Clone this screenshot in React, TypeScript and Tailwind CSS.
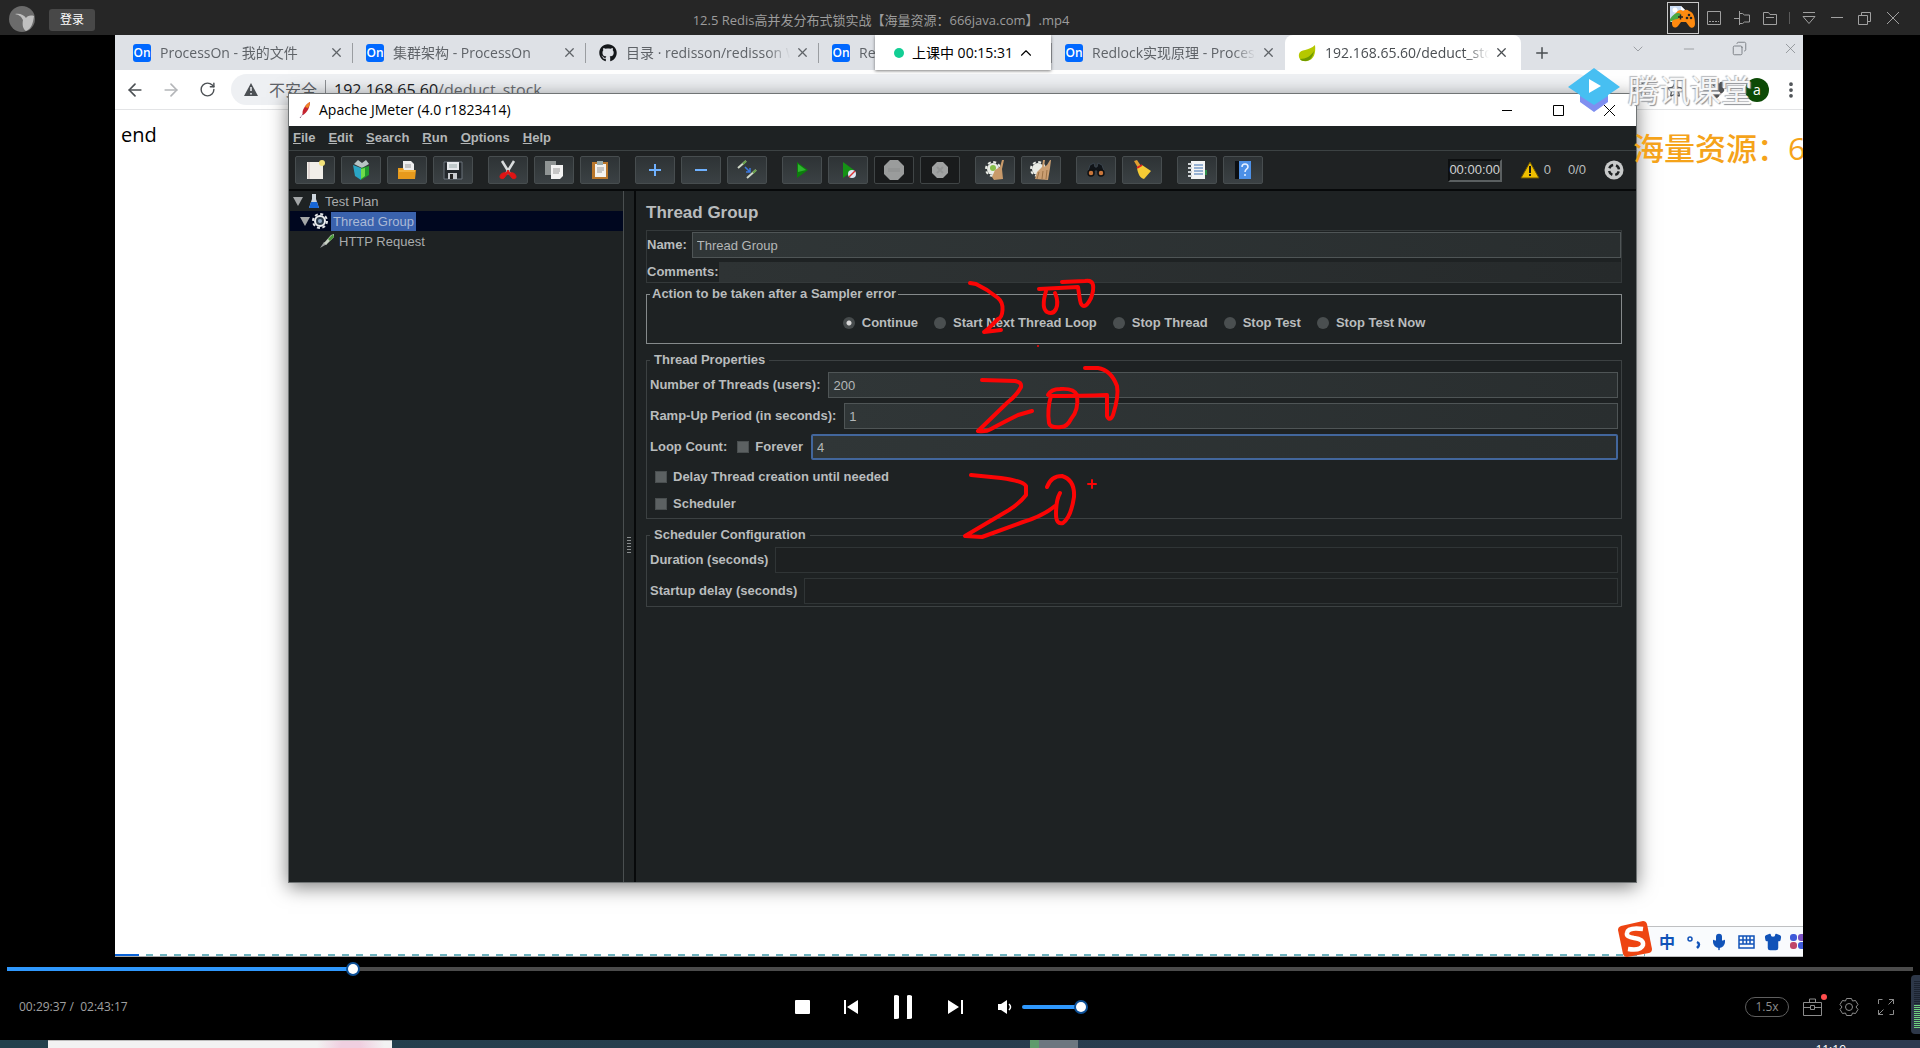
import React from 'react';
import {
  ArrowLeft, ArrowRight, RotateCw, X, Plus, Minus, ChevronDown, ChevronUp, Star, Puzzle,
  EllipsisVertical, Copy, Mic, Shirt, ZoomIn, Share2,
} from 'lucide-react';
import { FaGithub } from 'react-icons/fa';

type Kids = { children?: React.ReactNode };

/* ---------- player title bar ---------- */

const barBtn = 'flex h-7 w-7 items-center justify-center text-[#a0a0a0]';

function BarIcon({ label, children }: Kids & { label: string }) {
  return (
    <button aria-label={label} className={barBtn}>
      <svg width="16" height="16" viewBox="0 0 16 16" fill="none" stroke="currentColor" strokeWidth="1">{children}</svg>
    </button>
  );
}

function TitleBar() {
  return (
    <header className="relative flex h-[35px] shrink-0 items-center bg-[#262626] pl-2">
      <svg width="28" height="28" viewBox="0 0 28 28" aria-hidden="true">
        <circle cx="14" cy="15" r="13" fill="#6b6b6b" />
        <path d="M7 10c5-1 9 1 11 4 1-2 4-3 8-2-1 8-3 13-8 15-3-2-4-6-3-11-2-4-4-5-8-6z" fill="#c0c0c0" />
      </svg>
      <button className="ml-[13px] mt-1 h-[22px] w-[46px] rounded-[3px] bg-[#484848] text-xs leading-[22px] text-white">登录</button>
      <h1 className="pointer-events-none absolute inset-x-0 top-[9px] pr-[158px] text-center text-[13px] leading-[22px] text-[#9c9c9c]">
        12.5 Redis高并发分布式锁实战【海量资源：666java.com】.mp4
      </h1>
      <div className="ml-auto flex items-center pr-[13px]">
        <button aria-label="游戏" className="mr-px flex h-8 w-8 items-center justify-center border border-[#c8c8c8]">
          <svg width="28" height="28" viewBox="0 0 28 28">
            <path d="M1 2h11l4 4v12H1z" fill="#c9dcf5" />
            <path d="M12 2v4h4z" fill="#fff" />
            <circle cx="6" cy="6" r="2.500" fill="#fff" />
            <path d="M7 9c2-3 5-4 7-2 2-1 4-2 6 0 5 1 6 8 6 13 0 4-4 5-6 2l-3-4h-5l-3 4c-3 3-6 1-6-2 0-4 1-9 4-11z" fill="#ff8a0f" />
            <path d="M1 15c4-6 8-7 11-5l-3 5c-3 0-5 1-8 3z" fill="#4aa843" />
            <path d="M9 13h5M11.500 10.500v5" stroke="#222" strokeWidth="1.500" />
            <circle cx="20" cy="11" r="1.300" fill="#222" /><circle cx="22" cy="14" r="1.300" fill="#222" /><circle cx="18" cy="14" r="1.300" fill="#222" />
          </svg>
        </button>
        <BarIcon label="迷你模式"><path d="M1.500 1.500h13v13h-13z" /><path d="M3 11.500h10" strokeDasharray="2 1" /></BarIcon>
        <BarIcon label="置顶"><path d="M0 8.500h5M5.500 1v14M5.500 3.500h3l2 1.500h5v7h-5l-2 1.500h-3" /></BarIcon>
        <BarIcon label="打开文件夹"><path d="M1.500 14.500v-12h5l1.500 2h6.500v10zM4 7.500h8" /></BarIcon>
        <span className="h-3 w-px bg-[#5a5a5a] mx-[5px]" />
        <BarIcon label="菜单"><path d="M2 2.500h12M2 6.500h12l-6 7z" /></BarIcon>
        <BarIcon label="最小化"><path d="M2 7.500h12" /></BarIcon>
        <BarIcon label="还原"><path d="M1.500 5.500h9v9h-9zM4.500 5.500v-3h9v9h-3" /></BarIcon>
        <BarIcon label="关闭"><path d="M2 2l12 12M14 2L2 14" /></BarIcon>
      </div>
    </header>
  );
}

/* ---------- browser ---------- */

function OnIcon() {
  return (
    <span className="flex h-[18px] w-[18px] shrink-0 items-center justify-center rounded-[3px] bg-[#0068ff] text-xs font-semibold text-white">On</span>
  );
}

function Leaf() {
  return (
    <svg width="18" height="18" viewBox="0 0 18 18" className="shrink-0">
      <path d="M17 1c1 8-1 15-8 16-5 1-9-2-8-7 1-5 10-3 16-9z" fill="#b5c800" />
      <path d="M2 15c6 0 11-3 14-8-1 6-4 10-8 10-3 0-5 0-6-2z" fill="#6f9a00" />
    </svg>
  );
}

function Tab({ icon, children, active = false, line = true }: Kids & { icon: React.ReactNode; active?: boolean; line?: boolean }) {
  return (
    <div className={active
      ? 'flex h-full w-[236px] shrink-0 items-center rounded-t-lg bg-white pl-[13px] text-[#4a4e52]'
      : 'flex h-full w-[233px] shrink-0 items-center pl-[13px] text-[#5f6368]'}>
      {icon}
      <a href="#tab" className="ml-[9px] min-w-0 w-[164px] overflow-hidden whitespace-nowrap text-sm leading-5 [mask-image:linear-gradient(to_right,black_86%,transparent)]">{children}</a>
      <button aria-label="关闭标签页" className="ml-1 flex h-4 w-4 items-center justify-center"><X size={15} strokeWidth={2} /></button>
      {line && <span className="ml-auto h-5 w-px bg-[#9a9da1]" />}
    </div>
  );
}

function Browser() {
  return (
    <div className="flex h-full flex-col overflow-hidden bg-white">
      <div className="flex h-[35px] shrink-0 bg-[#dee1e6] pl-[5px]">
        <Tab icon={<OnIcon />}>ProcessOn - 我的文件</Tab>
        <Tab icon={<OnIcon />}>集群架构 - ProcessOn</Tab>
        <Tab icon={<FaGithub size={18} color="#14171a" className="shrink-0" />}>目录 · redisson/redisson W</Tab>
        <Tab icon={<OnIcon />}>Re</Tab>
        <Tab icon={<OnIcon />} line={false}>Redlock实现原理 - Process</Tab>
        <Tab icon={<Leaf />} active line={false}>192.168.65.60/deduct_sto</Tab>
        <button aria-label="新标签页" className="ml-[9px] flex w-6 items-center justify-center text-[#4a4e52]"><Plus size={18} /></button>
        <div className="ml-auto flex shrink-0 items-center gap-[35px] pr-1 pb-2 text-[#7b7f84]">
          <ChevronDown size={16} strokeWidth={1} />
          <Minus size={16} strokeWidth={1} />
          <Copy size={15} strokeWidth={1.5} className="rotate-90" />
          <X size={17} strokeWidth={1} />
        </div>
      </div>
      <div className="flex h-10 shrink-0 items-center border-b border-[#e3e4e6] bg-white pl-3 text-[#4c5054]">
        <button aria-label="后退" className="flex w-4 justify-center"><ArrowLeft size={20} className="shrink-0" /></button>
        <button aria-label="前进" className="ml-5 flex w-4 justify-center text-[#b4b6b9]"><ArrowRight size={20} className="shrink-0" /></button>
        <button aria-label="刷新" className="ml-5 flex w-4 justify-center"><RotateCw size={17} className="shrink-0" /></button>
        <div className="ml-4 flex h-[31px] flex-1 items-center rounded-full bg-[#eef0f3] pl-[13px] text-base">
          <svg width="14" height="13" viewBox="0 0 14 13"><path d="M7 0l7 13H0z" fill="#4c5054" /><path d="M7 4v4M7 10v1.500" stroke="#eef0f3" strokeWidth="1.500" /></svg>
          <span className="ml-[11px] text-[#5f6368]">不安全</span>
          <span className="mx-2 h-5 w-px bg-[#8d9094]" />
          <span className="text-[#202124]">192.168.65.60<span className="text-[#6a6e73]">/deduct_stock</span></span>
        </div>
        <div className="flex w-[210px] shrink-0 items-center pl-1 text-[#4c5054]">
          <ZoomIn size={15} />
          <Share2 size={15} className="ml-5" />
          <Star size={16} className="ml-5" />
          <Puzzle size={18} fill="currentColor" className="ml-6" />
          <span className="ml-5 flex h-6 w-6 items-center justify-center rounded-full bg-[#0d4a06] text-sm text-white">a</span>
          <EllipsisVertical size={20} strokeWidth={2.5} className="ml-3" />
        </div>
      </div>
      <p className="px-[6px] pt-[11px] text-xl leading-7 text-black">end</p>
      <div className="mt-auto flex h-[3px] shrink-0 border-b border-[#a9a9a9]">
        <span className="w-6 bg-[#0a63d8]" />
        <span className="flex-1 bg-[repeating-linear-gradient(to_right,#ffffff_0_7px,#6fb4c0_7px_14px)]" />
      </div>
    </div>
  );
}

/* ---------- JMeter icons ---------- */

const icons: Record<string, React.ReactNode> = {
  new: <><path d="M3 3h16v17H3z" fill="#f1efe9" /><path d="M5 3v17" stroke="#cbb" /><circle cx="18" cy="4" r="3" fill="#f2e27a" /></>,
  templates: <><path d="M4 5l4-4 4 3 4-3 3 4-7 4z" fill="#b9c4c4" /><path d="M3 6l8 3v12l-6-4z" fill="#2aa5c4" /><path d="M11 9l8-2v9l-8 5z" fill="#1f9a2c" /><path d="M11 10l4-1v8l-4 3z" fill="#6fdc4a" /></>,
  open: <><path d="M7 2h8l3 3v8H7z" fill="#eee" /><path d="M9 6h6M9 8h6" stroke="#999" /><path d="M2 9h5l1 2h12l-1 9H2z" fill="#e79a1c" /><path d="M3 12h16" stroke="#ffca5a" /></>,
  save: <><path d="M2 3h18v17H2z" fill="#23282c" stroke="#6b737a" /><path d="M5 3h12v8H5z" fill="#e6e9ec" /><path d="M7 6h8M7 8h8" stroke="#9aa" /><path d="M6 14h9v6H6z" fill="#c9ccd0" /><path d="M8 15h3v5H8z" fill="#222" /></>,
  cut: <><path d="M5 2l8 13M17 2L9 15" stroke="#d9dcdd" strokeWidth="2.500" /><path d="M11 11l2 3c3-1 6 1 6 4 0 2-3 2-4 1l-4-5-4 5c-1 1-4 1-4-1 0-3 3-5 6-4z" fill="#e01414" stroke="#e01414" strokeWidth="1" /></>,
  copy: <><path d="M2 2h11v14H2z" fill="#8f9494" /><path d="M8 6h12v11l-3 3H8z" fill="#f3f3f3" /><path d="M10 10h7M10 12h7M10 14h6" stroke="#999" /></>,
  paste: <><path d="M3 3h16v17H3z" fill="#b9762a" /><path d="M6 5h11v13H6z" fill="#f4f2ee" /><path d="M8 2h6v4H8z" fill="#9aa" /><path d="M8 9h7M8 11h7M8 13h5" stroke="#999" /></>,
  plus: <path d="M11 5v12M5 11h12" stroke="#6fb1ff" strokeWidth="2" />,
  minus: <path d="M5 11h12" stroke="#6fb1ff" strokeWidth="2" />,
  toggle: <><path d="M2 9L10 2M11 19l9-8" stroke="#cfd8c8" strokeWidth="2" /><path d="M7 5l3-3M17 14l3-3" stroke="#67a04a" strokeWidth="2" /><path d="M9 8l5 5M14 9v4h-4" stroke="#3c79e0" strokeWidth="1.500" fill="none" /></>,
  start: <><path d="M6 3l11 8-11 8z" fill="#0d7d0d" /><path d="M7 5l8 6-8 2z" fill="#2fb52f" /></>,
  startNoPause: <><path d="M6 3l11 8-11 8z" fill="#159215" /><circle cx="15" cy="15" r="4" fill="#dfe8f5" /><path d="M12 18l6-6" stroke="#d33" strokeWidth="1.500" /></>,
  stop: <><path d="M7 1h8l6 6v8l-6 6H7l-6-6V7z" fill="#9a9c9c" /><path d="M5 11h12" stroke="#929494" strokeWidth="4" /></>,
  shutdown: <><path d="M8 3h6l5 5v6l-5 5H8l-5-5V8z" fill="#a0a2a2" /><path d="M8 8l6 6M14 8l-6 6" stroke="#929494" strokeWidth="2" /></>,
  clear: <><circle cx="9" cy="10" r="6" fill="#e9ece6" /><circle cx="9" cy="10" r="7" fill="none" stroke="#e9ece6" strokeWidth="2" strokeDasharray="3 2.500" /><circle cx="9" cy="9" r="3" fill="#86bf4a" /><path d="M18 1h2l-2 9 1 10-9 1-2-3 3-7 5-3z" fill="#c89a6a" /></>,
  clearAll: <><circle cx="8" cy="10" r="6" fill="#e9ece6" /><circle cx="8" cy="10" r="7" fill="none" stroke="#e9ece6" strokeWidth="2" strokeDasharray="3 2.500" /><path d="M13 1h2l-1 7 3-2 3-5h1l-1 8-2 12-13-1 2-7 5-5z" fill="#cb9f72" /><path d="M9 13l-2 7M13 12l-1 8M17 11l-1 9" stroke="#9d7347" /></>,
  search: <><path d="M5 6l4-2 1 4h2l1-4 4 2 3 9h-8v-3h-2v3H2z" fill="#101418" stroke="#39434c" /><circle cx="6" cy="14" r="3" fill="#c9763a" stroke="#111" strokeWidth="1.500" /><circle cx="16" cy="14" r="3" fill="#c9763a" stroke="#111" strokeWidth="1.500" /></>,
  reset: <><path d="M3 2l3-1 4 6-3 2z" fill="#e0a030" /><path d="M6 9l5-3 9 6-7 8c-4-1-6-5-7-11z" fill="#f5cb35" /><path d="M6 9l5-3" stroke="#d22" strokeWidth="2" /></>,
  functions: <><path d="M5 2h14v18H5z" fill="#f3f4f5" /><path d="M8 6h9M8 9h9M8 12h9M8 15h9" stroke="#3a6fb0" /><path d="M2 5h4M2 9h4M2 13h4M2 17h4" stroke="#cfd3d6" strokeWidth="2" /><path d="M19 11h2v5h-2z" fill="#2e8d4a" /></>,
  help: <><path d="M3 2h4v18H3z" fill="#0c0f12" /><path d="M7 2h12v18H7z" fill="#4d90e6" /><path d="M10 8c0-4 6-4 6 0 0 2-3 2-3 5M13 15v2" stroke="#e6f0ff" strokeWidth="1.500" fill="none" /></>,
};

const groups: [string, string][][] = [
  [['new', 'New'], ['templates', 'Templates'], ['open', 'Open'], ['save', 'Save']],
  [['cut', 'Cut'], ['copy', 'Copy'], ['paste', 'Paste']],
  [['plus', 'Expand All'], ['minus', 'Collapse All'], ['toggle', 'Toggle']],
  [['start', 'Start'], ['startNoPause', 'Start no pauses'], ['stop', 'Stop'], ['shutdown', 'Shutdown']],
  [['clear', 'Clear'], ['clearAll', 'Clear All']],
  [['search', 'Search'], ['reset', 'Reset Search']],
  [['functions', 'Function Helper'], ['help', 'Help']],
];

function Toolbar() {
  return (
    <div className="flex h-[39px] shrink-0 items-center border-t border-[#3c4243] bg-[#1f2223] pl-[5px]">
      <div className="flex gap-[15px] pl-px">
        {groups.map((group, i) => (
          <div key={i} className="flex gap-[6px]">
            {group.map(([id, label]) => {
              const off = id === 'stop' || id === 'shutdown';
              return (
                <button key={id} aria-label={label} disabled={off}
                  className={off
                    ? 'flex h-7 w-10 items-center justify-center rounded-[2px] border border-[#404546] bg-[#191b1c]'
                    : 'flex h-7 w-10 items-center justify-center rounded-[2px] border border-[#474d4f] bg-linear-to-b from-[#2e3335] to-[#3b4144]'}>
                  <svg width="22" height="22" viewBox="0 0 22 22" fill="none">{icons[id]}</svg>
                </button>
              );
            })}
          </div>
        ))}
      </div>
      <div className="ml-auto flex items-center pr-3 text-[13px] font-bold text-[#b9bcbd]">
        <span className="flex h-[23px] w-[54px] items-center justify-center border-2 border-[#0d0f10] border-r-[#5b6061] border-b-[#5b6061] font-normal text-[#d0d2d2]">00:00:00</span>
        <svg width="20" height="18" viewBox="0 0 20 18" className="ml-[18px]"><path d="M10 1l9 16H1z" fill="#f0c000" stroke="#6d5600" /><path d="M10 5v7M10 13v2" stroke="#1a1a1a" strokeWidth="2" /></svg>
        <span className="ml-1 font-normal">0</span>
        <span className="ml-[17px] font-normal">0/0</span>
        <svg width="20" height="20" viewBox="0 0 20 20" className="ml-[18px]"><circle cx="10" cy="10" r="9.500" fill="#c8caca" /><circle cx="10" cy="10" r="5" fill="none" stroke="#1f2223" strokeWidth="2.500" strokeDasharray="4.854 3" strokeDashoffset="-1.500" /></svg>
      </div>
    </div>
  );
}

/* ---------- JMeter form ---------- */

const field = 'h-[26px] min-w-0 flex-1 border border-[#4f5556] bg-linear-to-r from-[#303637] to-[#292e2f] px-1 text-[13px] font-normal text-[#b4b7b8] outline-none';
const emptyField = 'h-[26px] min-w-0 flex-1 border border-[#303536] bg-[#1d2021] px-1 outline-none';
const tick = 'h-3 w-3 shrink-0 appearance-none bg-[#5c6162] border border-[#4a4f50]';
const box = 'min-w-0 border px-[3px]';

function Radio({ label, on = false }: { label: string; on?: boolean }) {
  return (
    <label className="flex items-center gap-[7px]">
      <input type="radio" name="on-error" defaultChecked={on}
        className="h-3 w-3 appearance-none rounded-full bg-[#4a4f50] checked:bg-[radial-gradient(circle,#d8d8d8_0_2px,#464b4c_3px)]" />
      {label}
    </label>
  );
}

function ThreadGroupForm() {
  return (
    <form className="flex min-w-0 flex-1 flex-col bg-[#1e2223] pr-[14px] pl-[10px] text-[13px] leading-4 font-bold text-[#b9bcbd]">
      <h2 className="pt-2 pb-1 text-[17px] leading-[27px]">Thread Group</h2>
      <div className="flex flex-col gap-1 border border-[#34393a] pt-px">
        <label className="flex items-center gap-[5px]">Name:<input className={field} defaultValue="Thread Group" /></label>
        <label className="flex items-center">Comments:<input className="h-5 min-w-0 flex-1 bg-linear-to-r from-[#2e3334] to-[#262a2b] px-1 outline-none" /></label>
      </div>
      <fieldset className="mt-[3px] min-w-0 border border-[#858a8b] px-[3px]">
        <legend className="px-[2px]">Action to be taken after a Sampler error</legend>
        <div className="flex h-[41px] items-center justify-center gap-4">
          <Radio label="Continue" on />
          <Radio label="Start Next Thread Loop" />
          <Radio label="Stop Thread" />
          <Radio label="Stop Test" />
          <Radio label="Stop Test Now" />
        </div>
      </fieldset>
      <fieldset className={`${box} mt-2 border-[#3c4142]`}>
        <legend className="px-1">Thread Properties</legend>
        <div className="flex flex-col gap-[5px] pt-1">
          <label className="flex items-center gap-2">Number of Threads (users):<input className={field} defaultValue="200" /></label>
          <label className="flex items-center gap-2">Ramp-Up Period (in seconds):<input className={field} defaultValue="1" /></label>
          <div className="flex items-center">
            <label htmlFor="loops">Loop Count:</label>
            <label className="mr-2 ml-[10px] flex items-center gap-[6px]"><input type="checkbox" className={tick} />Forever</label>
            <input id="loops" defaultValue="4" className="h-[26px] min-w-0 flex-1 rounded-[2px] border-2 border-[#42669c] bg-linear-to-r from-[#303637] to-[#292e2f] px-1 text-[13px] font-normal text-[#b4b7b8] outline-none" />
          </div>
        </div>
        <div className="flex flex-col items-start pt-[3px] pb-px pl-[5px]">
          <label className="flex h-[27px] items-center gap-[6px]"><input type="checkbox" className={tick} />Delay Thread creation until needed</label>
          <label className="flex h-[27px] items-center gap-[6px]"><input type="checkbox" className={tick} />Scheduler</label>
        </div>
      </fieldset>
      <fieldset className={`${box} mt-2 border-[#3c4142]`}>
        <legend className="px-1">Scheduler Configuration</legend>
        <div className="flex flex-col gap-[5px] pt-1 pb-[2px]">
          <label className="flex items-center gap-[7px]">Duration (seconds)<input className={emptyField} /></label>
          <label className="flex items-center gap-[7px]">Startup delay (seconds)<input className={emptyField} /></label>
        </div>
      </fieldset>
    </form>
  );
}

function Arrow() {
  return <svg width="10" height="9" viewBox="0 0 10 9" className="shrink-0"><path d="M0 0h10L5 9z" fill="#a3a6a7" /></svg>;
}

function Tree() {
  return (
    <ul className="w-[334px] shrink-0 border-r border-[#4a4f50] bg-[#1e2223] text-[13px] leading-[19px] text-[#a9acad]">
      <li className="flex h-5 items-center pl-[3px]">
        <Arrow />
        <svg width="12" height="16" viewBox="0 0 12 16" className="mx-[5px]"><path d="M4 1h4v5l3 9H1l3-9z" fill="#cdd5dd" /><path d="M3 9h6l2 6H1z" fill="#1766d6" /></svg>
        Test Plan
      </li>
      <li className="flex h-5 items-center bg-[#00071f] pl-[10px]">
        <Arrow />
        <svg width="16" height="16" viewBox="0 0 16 16" className="ml-[2px] mr-[3px]">
          <circle cx="8" cy="8" r="7" fill="none" stroke="#dfe2e4" strokeWidth="2" strokeDasharray="3 2.500" /><circle cx="8" cy="8" r="5" fill="#2b3a4a" stroke="#eceeef" strokeWidth="2" /><circle cx="8" cy="8" r="2" fill="#8fa6c0" />
        </svg>
        <span className="bg-[#3a62ad] px-[2px] text-[#aab9d6]">Thread Group</span>
      </li>
      <li className="flex h-5 items-center pl-[29px]">
        <svg width="16" height="16" viewBox="0 0 16 16" className="mr-1"><path d="M1 15l4-6 3 2z" fill="#9a9d9e" /><path d="M5 10l7-8 3-1v3l-8 8z" fill="#c8d2c4" /><path d="M9 6l5-5 1 3-4 4z" fill="#4c9a3a" /></svg>
        HTTP Request
      </li>
    </ul>
  );
}

function JMeter() {
  return (
    <section className="absolute top-[58px] right-[166px] bottom-[74px] left-[173px] flex flex-col border border-[#707475] bg-[#1e2223] font-['Liberation_Sans',sans-serif] shadow-[0_4px_18px_rgba(0,0,0,0.5)]">
      <div className="flex h-8 shrink-0 items-center bg-white pl-[9px] font-['Open_Sans',sans-serif] text-sm text-black">
        <svg width="13" height="18" viewBox="0 0 13 18"><path d="M12 1c0 5-3 11-7 13-2-3 2-11 7-13z" fill="#c4232f" /><path d="M12 1c0 2-1 4-2 6l-3-1c1-2 3-4 5-5z" fill="#f08a24" /><path d="M5 13l-3 4" stroke="#7a3a6a" strokeDasharray="1 1" /></svg>
        <span className="ml-2">Apache JMeter (4.0 r1823414)</span>
        <div className="ml-auto flex gap-[36px] pr-[19px] text-black">
          <button aria-label="Minimize"><svg width="15" height="15"><path d="M2 7.500h10" stroke="currentColor" /></svg></button>
          <button aria-label="Maximize"><svg width="15" height="15"><path d="M2.500 2.500h10v10h-10z" fill="none" stroke="currentColor" /></svg></button>
          <button aria-label="Close"><svg width="15" height="15"><path d="M2 2l11 11M13 2L2 13" stroke="currentColor" /></svg></button>
        </div>
      </div>
      <nav className="flex h-6 shrink-0 items-center gap-[13px] pl-1 text-[13px] font-bold text-[#b3b6b7]">
        {['File', 'Edit', 'Search', 'Run', 'Options', 'Help'].map((m) => (
          <button key={m} className="first-letter:underline">{m}</button>
        ))}
      </nav>
      <Toolbar />
      <div className="flex min-h-0 flex-1 border-t-2 border-[#07090a] pl-px">
        <Tree />
        <div className="flex w-3 shrink-0 items-center justify-center border-r-2 border-[#07090a] bg-[#1f2324] pt-4">
          <span className="h-4 w-1 bg-[repeating-linear-gradient(to_bottom,#8a8e8f_0_1px,transparent_1px_3px)]" />
        </div>
        <ThreadGroupForm />
      </div>
    </section>
  );
}

/* ---------- overlays on the video ---------- */

function Ink() {
  return (
    <svg className="pointer-events-none absolute inset-0 h-full w-full" fill="none" stroke="#fb0505" strokeWidth="4" strokeLinecap="round" strokeLinejoin="round">
      <g transform="translate(-115 -35)">
        <path d="M970 283l6 1 11 6 11 8q5 4 4.500 12t-4.500 9l-9 9-5 4 17-2" />
        <path d="M1039 289l39-2 2 13q1 6 4 6t7-8q3-8 2-13t-8-4l-23 1" />
        <path d="M1046 291q-5 17 1 21 6 3 9-3 3-7-1-16" />
        <path d="M982 380l33 1q7 1 6 6-4 8-13 15l-30 29q8 1 13-2 9-5 27-14l14-4" />
        <path d="M1048 395q3-6 12-6 14-1 17 6 2 15-6 24-4 8-10 8-11 1-12-4-2-14 2-27 30 0 56-1v21q3 6 6-1 6-19 4-29-6-16-19-18h-13" />
        <path d="M971 475l30 3q22 3 25 8v9q-6 8-17 15l-44 26 17 1 41-15q20-6 32-16" />
        <path d="M1047 487q4-11 15-11 13 4 12 21-3 20-11 26-7 2-7-9 0-14 4-21" />
        <path d="M1088 484h8M1092 480v8M1038 346v0" strokeWidth="2" />
      </g>
    </svg>
  );
}

function ClassTimer() {
  return (
    <button className="absolute top-0 left-[760px] flex h-[35px] w-[176px] items-center justify-center bg-white pl-[3px] text-sm text-black shadow-[0_1px_3px_rgba(0,0,0,0.5)]">
      <span className="h-[10px] w-[10px] rounded-full bg-[#12ce94]" />
      <span className="ml-2">上课中 00:15:31</span>
      <ChevronUp size={18} strokeWidth={1.5} className="ml-1" />
    </button>
  );
}

function Watermark() {
  return (
    <>
      <div className="absolute top-[32px] right-[51px] flex items-center gap-2">
        <svg width="52" height="46" viewBox="0 0 52 46">
          <path d="M12 26l14 9 14-9v9L26 45 12 35z" fill="#7f8ff0" />
          <path d="M26 1l26 19-12 8v1l-14 9-14-9v-1L0 20z" fill="#47bff2" />
          <path d="M21 12l12 7-12 7z" fill="#fff" />
        </svg>
        <span className="text-[31px] leading-9 text-white/90 [text-shadow:1px_1px_1px_#8f9296,-1px_-1px_1px_#b8babd]">腾讯课堂</span>
      </div>
      <div className="absolute top-[93px] right-0 w-[170px] overflow-hidden text-[31px] leading-10 font-medium whitespace-nowrap text-[#f5a31a]">海量资源：6</div>
    </>
  );
}

function InputMethodBar() {
  return (
    <div className="absolute right-0 bottom-0 flex h-9 w-[186px] items-end overflow-hidden">
      <svg width="36" height="36" viewBox="0 0 36 36" className="z-10 shrink-0">
        <path d="M4 5L26 0q3 0 4 3l5 25q0 3-3 4L10 36q-3 0-4-3L1 9q0-3 3-4z" fill="#ee4512" />
        <path d="M26 8q-15-2-16 4-1 4 7 5 10 1 9 7-2 6-15 4" stroke="#fff" strokeWidth="4.500" fill="none" />
      </svg>
      <div className="-ml-2 flex h-[31px] flex-1 items-center border-y border-[#bfc0c2] bg-[#f9fbfd] pl-[14px] text-[#1153b8]">
        <span className="w-4 text-base font-bold">中</span>
        <svg width="14" height="14" viewBox="0 0 14 14" className="ml-3 shrink-0"><circle cx="3" cy="4" r="2" fill="none" stroke="currentColor" strokeWidth="1.500" /><path d="M10 7q4 2 0 6" stroke="currentColor" strokeWidth="2.500" fill="none" /></svg>
        <Mic size={18} fill="currentColor" className="ml-[9px] shrink-0" />
        <svg width="17" height="14" viewBox="0 0 17 14" className="ml-[10px] shrink-0"><path d="M1 1h15v12H1zM1 5h15M1 9h15M5 1v8M8.500 1v8M12 1v8" fill="none" stroke="currentColor" strokeWidth="1.500" /></svg>
        <Shirt size={18} fill="currentColor" className="ml-[9px] shrink-0" />
        <svg width="16" height="16" viewBox="0 0 16 16" className="ml-2 shrink-0"><rect width="7" height="7" rx="3" fill="#3e5ad8" /><rect x="8" width="7" height="7" rx="3" fill="#7a4fc0" /><rect y="8" width="7" height="7" rx="3" fill="#c0476a" /><rect x="8" y="8" width="7" height="7" rx="3" fill="#3e5ad8" /></svg>
      </div>
    </div>
  );
}

/* ---------- player controls ---------- */

const thumb = '[&::-webkit-slider-thumb]:h-[10px] [&::-webkit-slider-thumb]:w-[10px] [&::-webkit-slider-thumb]:appearance-none [&::-webkit-slider-thumb]:rounded-full [&::-webkit-slider-thumb]:bg-white [&::-webkit-slider-thumb]:shadow-[0_0_0_2px_#0c4f96]';

function Slider({ label, value, className }: { label: string; value: number; className: string }) {
  return (
    <input type="range" aria-label={label} min={0} max={1000} defaultValue={value}
      className={`h-1 appearance-none ${thumb} ${className}`}
      style={{ background: `linear-gradient(to right, #2f98fd ${value / 10}%, #4b4b4b ${value / 10}%)` }} />
  );
}

function Controls() {
  return (
    <footer className="relative flex h-[83px] shrink-0 flex-col bg-black">
      <div className="flex pt-[10px] px-[7px]"><Slider label="进度" value={180} className="w-full" /></div>
      <div className="grid flex-1 grid-cols-[1fr_auto_1fr] items-center pt-[2px] text-white">
        <div className="pl-[19px] text-xs whitespace-pre text-[#a0a0a0]">00:29:37 /  02:43:17</div>
        <div className="mr-10 flex items-center">
          <button aria-label="停止"><svg width="16" height="16"><rect y="1" width="15" height="14" rx="1" fill="currentColor" /></svg></button>
          <button aria-label="上一个" className="ml-[33px]"><svg width="15" height="14"><path d="M0 0h2v14H0zM14 0v14L3 7z" fill="currentColor" /></svg></button>
          <button aria-label="暂停" className="ml-[35px]"><svg width="18" height="24"><path d="M0 1q0-1 2-1t3 1v22q0 1-3 1t-2-1zM13 1q0-1 2-1t3 1v22q0 1-3 1t-2-1z" fill="currentColor" /></svg></button>
          <button aria-label="下一个" className="ml-[36px]"><svg width="15" height="14"><path d="M13 0h2v14h-2zM0 0v14l11-7z" fill="currentColor" /></svg></button>
          <button aria-label="静音" className="ml-[35px]"><svg width="16" height="14"><path d="M0 4h3l6-4v14l-6-4H0z" fill="currentColor" /><path d="M11 4q3 3 0 6" stroke="currentColor" strokeWidth="1.500" fill="none" /></svg></button>
          <Slider label="音量" value={1000} className="ml-2 w-16 rounded-full" />
        </div>
        <div className="flex items-center justify-end pr-[25px] text-[#8c8c8c]">
          <button className="h-5 w-[44px] rounded-full border border-[#5f5f5f] text-xs leading-[18px]">1.5x</button>
          <button aria-label="工具箱" className="relative ml-[14px]">
            <svg width="20" height="18" viewBox="0 0 20 18" fill="none" stroke="currentColor"><path d="M.5 4.500h18v13H.5zM6.500 4v-3h6v3M.5 9.500h7M11.500 9.500h7M7.500 7.500h4v4h-4z" /></svg>
            <span className="absolute -top-1 -right-1 h-[6px] w-[6px] rounded-full bg-[#ff4d4d]" />
          </button>
          <button aria-label="设置" className="ml-[16px]">
            <svg width="20" height="20" viewBox="0 0 20 20" fill="none" stroke="currentColor"><path d="M7.500 1.500h5l1 2.500 3-.5 2.500 4-2 2.500 2 2.500-2.500 4-3-.5-1 2.500h-5l-1-2.500-3 .5-2.500-4 2-2.500-2-2.500 2.500-4 3 .5z" /><circle cx="10" cy="10" r="3.500" /></svg>
          </button>
          <button aria-label="全屏" className="ml-[18px]">
            <svg width="18" height="18" viewBox="0 0 18 18" fill="none" stroke="currentColor"><path d="M1.500 6v-4.500h4M12 1.500h4.500v4.500l0-4.500-5 5M16.500 12v4.500h-4M6 16.500h-4.500v-4.500 4.500l5-5" /></svg>
          </button>
        </div>
      </div>
      <div className="absolute right-0 bottom-[6px] h-[59px] w-[9px] rounded-l bg-[#2d3748] p-[3px] pr-0 pt-[6px]">
        <div className="h-6 bg-[repeating-linear-gradient(to_bottom,#1c2330_0_1px,transparent_1px_2px)]" />
        <div className="h-[23px] bg-[repeating-linear-gradient(to_bottom,#6fd07e_0_1px,#2d3748_1px_2px)]" />
      </div>
    </footer>
  );
}

function TaskbarEdge() {
  return (
    <div className="relative flex h-2 shrink-0 overflow-hidden bg-linear-to-r from-[#22404c] to-[#2d3a50] pl-12">
      <span className="w-[344px] border-t border-[#bbb] bg-[radial-gradient(circle_at_88%_100%,#f0cfe0_0_10px,#f2f2f2_34px)]" />
      <span className="ml-[638px] w-[9px] bg-[#5e9b6b]" />
      <span className="w-[39px] bg-[#6d7780]" />
      <time className="mt-[2px] mr-[74px] ml-auto text-xs leading-4 text-white">11:19</time>
    </div>
  );
}

export default function App() {
  return (
    <div className="flex h-screen min-w-[1400px] flex-col overflow-hidden bg-black font-['Open_Sans','Noto_Sans_CJK_SC',sans-serif]">
      <TitleBar />
      <main className="min-h-0 flex-1 pr-[117px] pl-[115px]">
        <div className="relative h-full overflow-hidden">
          <Browser />
          <JMeter />
          <ClassTimer />
          <Watermark />
          <InputMethodBar />
          <Ink />
        </div>
      </main>
      <Controls />
      <TaskbarEdge />
    </div>
  );
}
